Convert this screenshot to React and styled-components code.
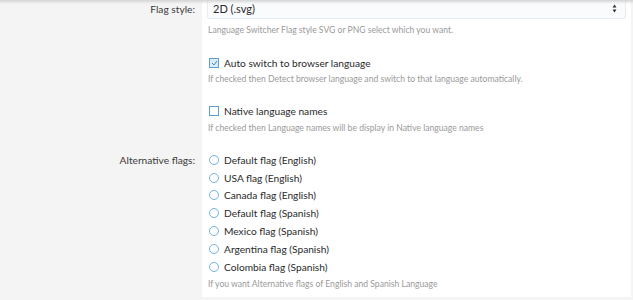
import React from "react";
import styled, { createGlobalStyle } from "styled-components";

const Global = createGlobalStyle`
  html, body { margin: 0; padding: 0; background: #f4f4f4; }
  body { font-family: "Lato", "Noto Sans", sans-serif; color: #333; }
`;

const Page = styled.div`
  width: 633px;
  height: 300px;
  overflow: hidden;
  position: relative;
  display: grid;
  grid-template-columns: 202px 429px;
  align-content: start;
  background: #f4f4f4;
`;

const TopShade = styled.div`
  position: absolute;
  left: 0; right: 0; top: 0;
  height: 4px;
  background: linear-gradient(#d4d4d4, rgba(244,244,244,0));
  pointer-events: none;
`;

const LabelCol = styled.div`
  display: flex;
  flex-direction: column;
`;

const Label = styled.div`
  height: ${p => p.$h}px;
  padding-right: 7px;
  padding-top: ${p => p.$top}px;
  box-sizing: border-box;
  text-align: right;
  font-size: 10.2px;
  line-height: 16px;
  color: #3a3a3a;
`;

const Panel = styled.div`
  background: #fff;
  padding: 0 5px 0 5px;
  height: 297px;
  box-sizing: border-box;
`;

const Select = styled.div`
  height: 19px;
  margin-top: -1px;
  border: 1px solid #e8ebef;
  border-top: none;
  border-radius: 0 0 3px 3px;
  background: #fafbfc;
  display: flex;
  align-items: center;
  justify-content: space-between;
  padding: 0 8px 0 5px;
  font-size: 11px;
  color: #2a2a2a;
`;

const Help = styled.div`
  font-size: 8.6px;
  color: #9a9a9a;
  margin-top: ${p => p.$mt || 0}px;
  line-height: 12px;
  padding-left: 1px;
`;

const Check = styled.div`
  display: flex;
  align-items: center;
  gap: 5px;
  margin-top: ${p => p.$mt || 0}px;
  font-size: 10.2px;
  line-height: 16px;
  color: #2a2a2a;
`;

const Box = styled.span`
  width: 8px;
  height: 8px;
  border: 1px solid #5a9fd4;
  background: ${p => (p.$on ? "#dcecf8" : "#fff")};
  display: inline-flex;
  align-items: center;
  justify-content: center;
  margin-left: 2px;
`;

const RadioList = styled.div`
  display: flex;
  flex-direction: column;
  margin-top: 17px;
`;

const RadioRow = styled.label`
  display: flex;
  align-items: center;
  gap: 5px;
  height: 17.8px;
  font-size: 10.2px;
  color: #2a2a2a;
`;

const Circle = styled.span`
  width: 8px;
  height: 8px;
  border-radius: 50%;
  border: 1.3px solid #74b4de;
  margin-left: 2px;
`;

const flags = [
  "Default flag (English)",
  "USA flag (English)",
  "Canada flag (English)",
  "Default flag (Spanish)",
  "Mexico flag (Spanish)",
  "Argentina flag (Spanish)",
  "Colombia flag (Spanish)",
];

export default function App() {
  return (
    <>
      <Global />
      <Page>
        <LabelCol>
          <Label $h={152} $top={1}>Flag style:</Label>
          <Label $h={20} $top={0}>Alternative flags:</Label>
        </LabelCol>
        <Panel>
          <Select>
            <span>2D (.svg)</span>
            <svg width="5" height="9" viewBox="0 0 5 9">
              <path d="M2.5 0.5 L4.5 3.5 H0.5 Z M2.5 8.5 L4.5 5.5 H0.5 Z" fill="#333" />
            </svg>
          </Select>
          <Help $mt={5}>Language Switcher Flag style SVG or PNG select which you want.</Help>
          <Check $mt={19}>
            <Box $on>
              <svg width="7" height="6" viewBox="0 0 7 6">
                <path d="M1 3 L3 5 L6 1" stroke="#3d8ccc" strokeWidth="1" fill="none" />
              </svg>
            </Box>
            Auto switch to browser language
          </Check>
          <Help $mt={2}>If checked then Detect browser language and switch to that language automatically.</Help>
          <Check $mt={18}>
            <Box />
            Native language names
          </Check>
          <Help $mt={3}>If checked then Language names will be display in Native language names</Help>
          <RadioList>
            {flags.map(f => (
              <RadioRow key={f}>
                <Circle />
                {f}
              </RadioRow>
            ))}
          </RadioList>
          <Help $mt={2}>If you want Alternative flags of English and Spanish Language</Help>
        </Panel>
        <TopShade />
      </Page>
    </>
  );
}
